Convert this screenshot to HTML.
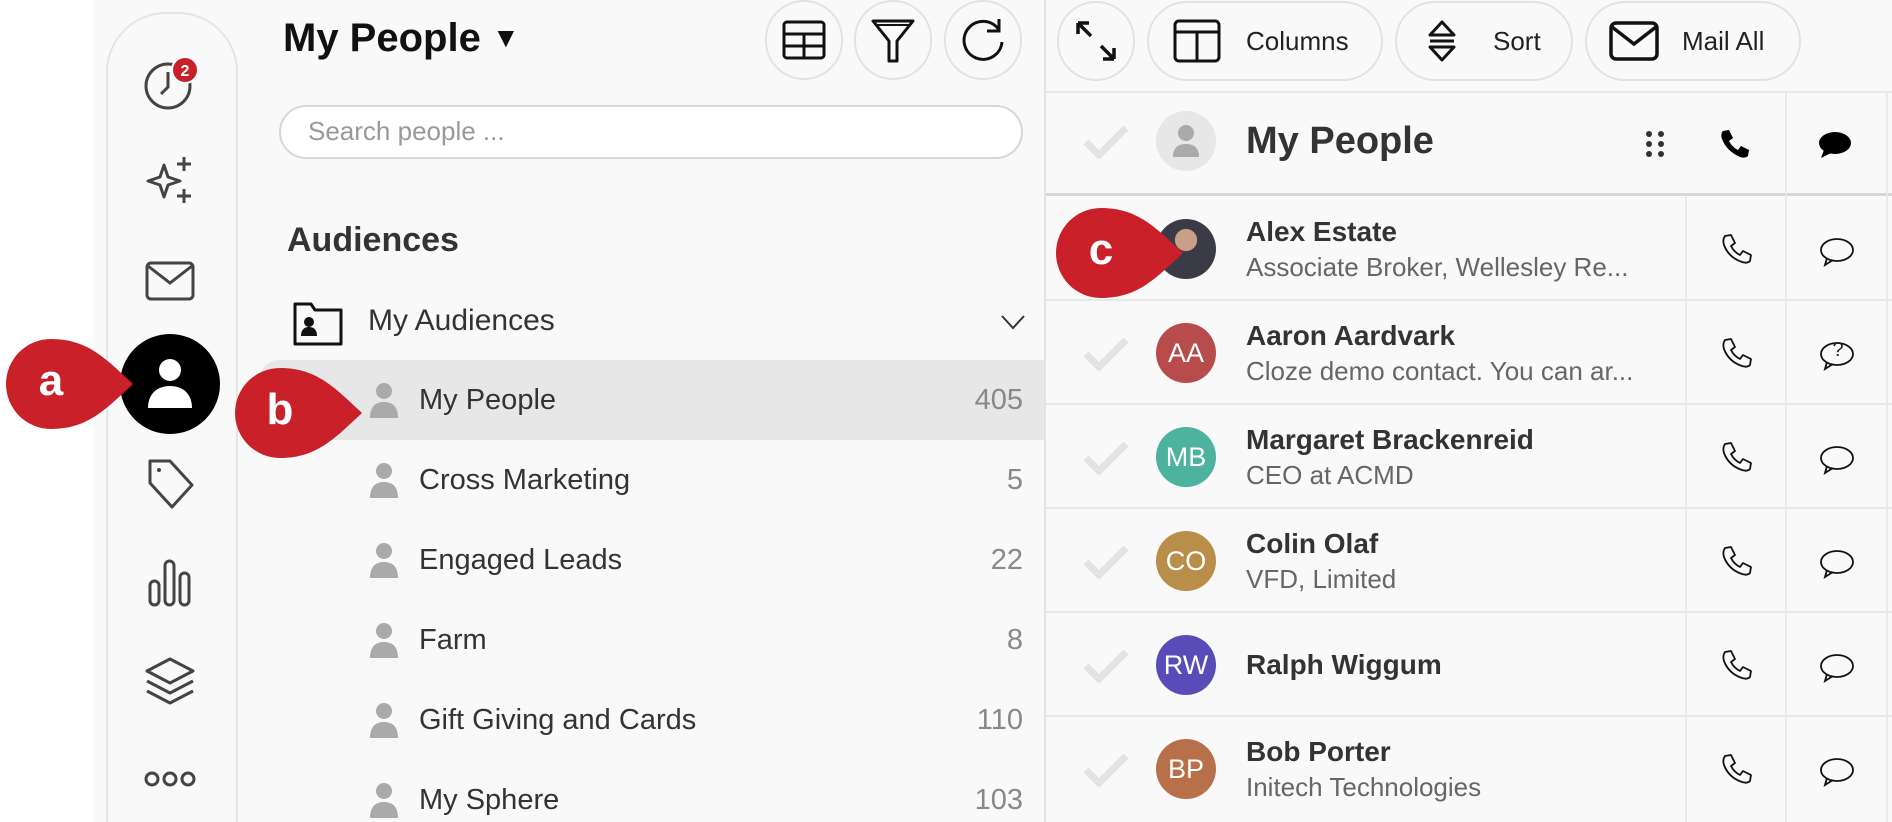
<!DOCTYPE html>
<html style="overflow:hidden;width:1892px;height:822px"><head><meta charset="utf-8"><style>
*{margin:0;padding:0;box-sizing:border-box}
body{width:1892px;height:822px;overflow:hidden;background:#faf9fa;font-family:"Liberation Sans",sans-serif;position:relative;color:#222}
.abs{position:absolute}
.side{left:106px;top:12px;width:132px;height:810px;border:2px solid #e6e5e6;border-bottom:none;border-radius:60px 60px 0 0;background:#faf9fa}
.ic{position:absolute;left:140px;width:60px;height:60px;display:flex;align-items:center;justify-content:center}
.rbtn{position:absolute;border:2px solid #e3e2e3;border-radius:50px;background:#faf9fa;display:flex;align-items:center;justify-content:center;font-size:26px;color:#222}
.li{position:absolute;left:259px;width:786px;height:80px;font-size:29px;color:#333}
.li .t{position:absolute;left:160px;top:22px}
.li .n{position:absolute;right:22px;top:22px;color:#888}
.li svg{position:absolute;left:110px;top:20px}
.row{position:absolute;left:1045px;width:847px;border-bottom:2px solid #e8e7e8}
.row .av{position:absolute;left:111px;width:60px;height:60px;border-radius:50%;color:#fff;font-size:27px;display:flex;align-items:center;justify-content:center}
.row .nm{position:absolute;left:201px;font-size:28px;font-weight:bold;color:#333;white-space:nowrap}
.row .sb{position:absolute;left:201px;font-size:26px;color:#666;white-space:nowrap}
.vd{position:absolute;width:2px;background:#ebeaeb}
.ck{position:absolute;left:38px}
.pl{position:absolute;color:#fff;font-size:44px;font-weight:bold;width:90px;text-align:center}
</style></head><body>
<div class="abs" style="left:0;top:0;width:94px;height:822px;background:#fff"></div>
<div class="abs side"></div>
<!-- sidebar icons -->
<div class="ic" style="top:54px"><svg width="60" height="60" viewBox="0 0 60 60"><circle cx="28" cy="32" r="22" fill="none" stroke="#444" stroke-width="3"/><path d="M28 18v15l-7 7" fill="none" stroke="#444" stroke-width="3"/><circle cx="45" cy="16" r="13" fill="#c9202a" stroke="#fff" stroke-width="2"/><text x="45" y="22" fill="#fff" font-size="16" font-weight="bold" text-anchor="middle" font-family="Liberation Sans">2</text></svg></div>
<div class="ic" style="top:151px"><svg width="60" height="60" viewBox="0 0 60 60"><path d="M24 14l4 12 12 4-12 4-4 12-4-12-12-4 12-4z" fill="none" stroke="#444" stroke-width="3" stroke-linejoin="round"/><path d="M44 6v14M37 13h14M44 38v14M37 45h14" stroke="#444" stroke-width="3"/></svg></div>
<div class="ic" style="top:251px"><svg width="60" height="60" viewBox="0 0 60 60"><rect x="7" y="12" width="46" height="36" rx="4" fill="none" stroke="#444" stroke-width="3"/><path d="M8 15l22 17 22-17" fill="none" stroke="#444" stroke-width="3"/></svg></div>
<div class="abs" style="left:120px;top:334px;width:100px;height:100px;border-radius:50%;background:#000"></div>
<svg class="abs" style="left:145px;top:356px" width="50" height="56" viewBox="0 0 50 56"><circle cx="25" cy="14" r="11" fill="#fff"/><path d="M3 52c0-14 9-22 22-22s22 8 22 22z" fill="#fff"/></svg>
<div class="ic" style="top:453px"><svg width="60" height="60" viewBox="0 0 60 60"><path d="M10 8h20l22 24-20 22-22-24z" fill="none" stroke="#444" stroke-width="3" stroke-linejoin="round"/><circle cx="19" cy="17" r="2" fill="#444"/></svg></div>
<div class="ic" style="top:553px"><svg width="60" height="60" viewBox="0 0 60 60"><rect x="10" y="28" width="9" height="24" rx="4.5" fill="none" stroke="#444" stroke-width="3"/><rect x="25" y="8" width="9" height="44" rx="4.5" fill="none" stroke="#444" stroke-width="3"/><rect x="40" y="20" width="9" height="32" rx="4.5" fill="none" stroke="#444" stroke-width="3"/></svg></div>
<div class="ic" style="top:653px"><svg width="60" height="60" viewBox="0 0 60 60"><path d="M30 6l23 12-23 12-23-12z" fill="none" stroke="#444" stroke-width="3" stroke-linejoin="round"/><path d="M7 28l23 12 23-12M7 38l23 12 23-12" fill="none" stroke="#444" stroke-width="3" stroke-linejoin="round"/></svg></div>
<div class="ic" style="top:749px"><svg width="60" height="60" viewBox="0 0 60 60"><circle cx="12" cy="30" r="6" fill="none" stroke="#444" stroke-width="3"/><circle cx="30" cy="30" r="6" fill="none" stroke="#444" stroke-width="3"/><circle cx="48" cy="30" r="6" fill="none" stroke="#444" stroke-width="3"/></svg></div>

<!-- middle -->
<div class="abs" style="left:283px;top:16px;font-size:40px;font-weight:bold;color:#111">My People <span style="font-size:28px;vertical-align:4px">▼</span></div>
<div class="rbtn" style="left:765px;top:0;width:78px;height:80px"><svg width="44" height="40" viewBox="0 0 44 40"><rect x="2" y="2" width="40" height="36" rx="3" fill="none" stroke="#111" stroke-width="3"/><path d="M2 14h40M2 26h40M22 14v24" stroke="#111" stroke-width="3"/></svg></div>
<div class="rbtn" style="left:854px;top:0;width:78px;height:80px"><svg width="44" height="46" viewBox="0 0 44 46"><path d="M2 4h40L26 24v20h-8V24z" fill="none" stroke="#111" stroke-width="3" stroke-linejoin="round"/><path d="M4 8h36" stroke="#111" stroke-width="2"/></svg></div>
<div class="rbtn" style="left:944px;top:0;width:78px;height:80px"><svg width="48" height="48" viewBox="0 0 48 48"><path d="M40 14A19 19 0 1 0 43 26" fill="none" stroke="#111" stroke-width="3"/><path d="M40 3v12H28" fill="none" stroke="#111" stroke-width="3"/></svg></div>
<div class="abs" style="left:279px;top:105px;width:744px;height:54px;border:2px solid #d8d7d8;border-radius:27px;background:#fff"></div>
<div class="abs" style="left:308px;top:116px;font-size:26px;color:#999">Search people ...</div>
<div class="abs" style="left:287px;top:221px;font-size:34px;font-weight:bold;color:#333">Audiences</div>
<svg class="abs" style="left:293px;top:302px" width="50" height="44" viewBox="0 0 50 44"><path d="M2 2h16l4 6h26v34H2z" fill="none" stroke="#111" stroke-width="3" stroke-linejoin="round"/><circle cx="16" cy="20" r="5" fill="#111"/><path d="M8 34c0-7 4-9 8-9s8 2 8 9z" fill="#111"/></svg>
<div class="abs" style="left:368px;top:304px;font-size:30px;color:#333">My Audiences</div>
<svg class="abs" style="left:1000px;top:314px" width="26" height="16" viewBox="0 0 26 16"><path d="M2 2l11 12L24 2" fill="none" stroke="#333" stroke-width="2"/></svg>
<div class="abs" style="left:259px;top:360px;width:786px;height:80px;background:#e8e7e8;border-radius:20px 0 0 0"></div>
<div class="li" style="top:362px"><svg width="30" height="36" viewBox="0 0 30 36"><circle cx="15" cy="9" r="8" fill="#aaa"/><path d="M1 36c0-12 6-16 14-16s14 4 14 16z" fill="#aaa"/></svg><span class="t">My People</span><span class="n">405</span></div>
<div class="li" style="top:442px"><svg width="30" height="36" viewBox="0 0 30 36"><circle cx="15" cy="9" r="8" fill="#aaa"/><path d="M1 36c0-12 6-16 14-16s14 4 14 16z" fill="#aaa"/></svg><span class="t">Cross Marketing</span><span class="n">5</span></div>
<div class="li" style="top:522px"><svg width="30" height="36" viewBox="0 0 30 36"><circle cx="15" cy="9" r="8" fill="#aaa"/><path d="M1 36c0-12 6-16 14-16s14 4 14 16z" fill="#aaa"/></svg><span class="t">Engaged Leads</span><span class="n">22</span></div>
<div class="li" style="top:602px"><svg width="30" height="36" viewBox="0 0 30 36"><circle cx="15" cy="9" r="8" fill="#aaa"/><path d="M1 36c0-12 6-16 14-16s14 4 14 16z" fill="#aaa"/></svg><span class="t">Farm</span><span class="n">8</span></div>
<div class="li" style="top:682px"><svg width="30" height="36" viewBox="0 0 30 36"><circle cx="15" cy="9" r="8" fill="#aaa"/><path d="M1 36c0-12 6-16 14-16s14 4 14 16z" fill="#aaa"/></svg><span class="t">Gift Giving and Cards</span><span class="n">110</span></div>
<div class="li" style="top:762px"><svg width="30" height="36" viewBox="0 0 30 36"><circle cx="15" cy="9" r="8" fill="#aaa"/><path d="M1 36c0-12 6-16 14-16s14 4 14 16z" fill="#aaa"/></svg><span class="t">My Sphere</span><span class="n">103</span></div>

<!-- right -->
<div class="abs" style="left:1044px;top:0;width:2px;height:822px;background:#e4e3e4"></div>
<div class="rbtn" style="left:1057px;top:1px;width:78px;height:80px"><svg width="44" height="44" viewBox="0 0 44 44"><path d="M4 4l13 13M4 4v11M4 4h11M40 40L27 27M40 40V29M40 40H29" fill="none" stroke="#111" stroke-width="3.5"/></svg></div>
<div class="rbtn" style="left:1147px;top:1px;width:236px;height:80px;justify-content:flex-start;padding-left:24px"><svg width="48" height="44" viewBox="0 0 48 44"><rect x="2" y="2" width="44" height="40" rx="4" fill="none" stroke="#111" stroke-width="3"/><path d="M2 13h44M24 13v29" stroke="#111" stroke-width="3"/></svg><span style="margin-left:25px">Columns</span></div>
<div class="rbtn" style="left:1395px;top:1px;width:178px;height:80px;justify-content:flex-start;padding-left:30px"><svg width="30" height="44" viewBox="0 0 30 44"><path d="M3 16L15 3l12 13zM3 28l12 13 12-13z" fill="none" stroke="#111" stroke-width="3" stroke-linejoin="round"/><path d="M3 22h24" stroke="#111" stroke-width="3"/></svg><span style="margin-left:36px">Sort</span></div>
<div class="rbtn" style="left:1585px;top:1px;width:216px;height:80px;justify-content:flex-start;padding-left:22px"><svg width="50" height="40" viewBox="0 0 50 40"><rect x="2" y="2" width="46" height="36" rx="5" fill="none" stroke="#111" stroke-width="3.5"/><path d="M3 6l22 17L47 6" fill="none" stroke="#111" stroke-width="3.5"/></svg><span style="margin-left:23px">Mail All</span></div>
<div class="abs" style="left:1046px;top:91px;width:846px;height:2px;background:#ebeaeb"></div>
<div class="abs" style="left:1046px;top:193px;width:846px;height:3px;background:#d8d7d8"></div>
<svg class="abs" style="left:1083px;top:125px" width="46" height="34" viewBox="0 0 46 34"><path d="M3 17l13 13L43 3" fill="none" stroke="#e4e3e4" stroke-width="7"/></svg>
<div class="abs" style="left:1156px;top:111px;width:60px;height:60px;border-radius:50%;background:#e8e7e8"></div>
<svg class="abs" style="left:1172px;top:124px" width="28" height="34" viewBox="0 0 28 34"><circle cx="14" cy="9" r="8" fill="#aaa"/><path d="M1 33c0-10 6-13 13-13s13 3 13 13z" fill="#aaa"/></svg>
<div class="abs" style="left:1246px;top:120px;font-size:38px;font-weight:bold;color:#333">My People</div>
<svg class="abs" style="left:1645px;top:130px" width="20" height="28" viewBox="0 0 20 28"><g fill="#333"><circle cx="4" cy="4" r="3"/><circle cx="16" cy="4" r="3"/><circle cx="4" cy="14" r="3"/><circle cx="16" cy="14" r="3"/><circle cx="4" cy="24" r="3"/><circle cx="16" cy="24" r="3"/></g></svg>
<svg class="abs" style="left:1719px;top:128px" width="32" height="32" viewBox="0 0 32 32"><path d="M4 3l6-1 4 8-4 3c2 4 5 7 9 9l3-4 8 4-1 6c-2 2-5 2-8 1C12 25 6 19 3 11 2 8 2 5 4 3z" fill="#000"/></svg>
<svg class="abs" style="left:1818px;top:130px" width="34" height="30" viewBox="0 0 34 30"><ellipse cx="17" cy="13" rx="16" ry="11" fill="#000"/><path d="M6 20l-3 8 10-5z" fill="#000"/></svg>
<div class="vd" style="left:1785px;top:92px;height:730px"></div>
<div class="vd" style="left:1886px;top:92px;height:730px"></div>
<div class="vd" style="left:1685px;top:197px;height:625px"></div>

<!-- rows -->
<div class="row" style="top:197px;height:104px"><div class="av" style="top:22px;background:radial-gradient(circle at 50% 35%,#c9a087 0 22%,#3b3b48 23% 100%)"></div><div class="nm" style="top:19px">Alex Estate</div><div class="sb" style="top:55px">Associate Broker, Wellesley Re...</div></div>
<div class="row" style="top:301px;height:104px"><svg class="ck" style="top:36px" width="46" height="34" viewBox="0 0 46 34"><path d="M3 17l13 13L43 3" fill="none" stroke="#e4e3e4" stroke-width="7"/></svg><div class="av" style="top:22px;background:#b84c4c">AA</div><div class="nm" style="top:19px">Aaron Aardvark</div><div class="sb" style="top:55px">Cloze demo contact. You can ar...</div></div>
<div class="row" style="top:405px;height:104px"><svg class="ck" style="top:36px" width="46" height="34" viewBox="0 0 46 34"><path d="M3 17l13 13L43 3" fill="none" stroke="#e4e3e4" stroke-width="7"/></svg><div class="av" style="top:22px;background:#4db39e">MB</div><div class="nm" style="top:19px">Margaret Brackenreid</div><div class="sb" style="top:55px">CEO at ACMD</div></div>
<div class="row" style="top:509px;height:104px"><svg class="ck" style="top:36px" width="46" height="34" viewBox="0 0 46 34"><path d="M3 17l13 13L43 3" fill="none" stroke="#e4e3e4" stroke-width="7"/></svg><div class="av" style="top:22px;background:#b98e4a">CO</div><div class="nm" style="top:19px">Colin Olaf</div><div class="sb" style="top:55px">VFD, Limited</div></div>
<div class="row" style="top:613px;height:104px"><svg class="ck" style="top:36px" width="46" height="34" viewBox="0 0 46 34"><path d="M3 17l13 13L43 3" fill="none" stroke="#e4e3e4" stroke-width="7"/></svg><div class="av" style="top:22px;background:#5a4cb8">RW</div><div class="nm" style="top:36px">Ralph Wiggum</div></div>
<div class="row" style="top:717px;height:105px;border:none"><svg class="ck" style="top:36px" width="46" height="34" viewBox="0 0 46 34"><path d="M3 17l13 13L43 3" fill="none" stroke="#e4e3e4" stroke-width="7"/></svg><div class="av" style="top:22px;background:#b8704a">BP</div><div class="nm" style="top:19px">Bob Porter</div><div class="sb" style="top:55px">Initech Technologies</div></div>

<svg width="0" height="0" style="position:absolute"><defs>
<symbol id="ph" viewBox="0 0 34 34"><path d="M5 3l6-1 4 8-4 3c2 4 5 7 9 9l3-4 8 4-1 6c-2 2-5 2-8 1C13 26 7 20 4 12 3 9 3 6 5 3z" fill="none" stroke="#111" stroke-width="1.8" stroke-linejoin="round"/></symbol>
<symbol id="ch" viewBox="0 0 36 32"><ellipse cx="18" cy="14" rx="16" ry="11" fill="none" stroke="#111" stroke-width="1.8"/><path d="M8 22l-2 7 8-5" fill="none" stroke="#111" stroke-width="1.8"/></symbol>
<symbol id="pin" viewBox="0 0 127 90"><path d="M127 45C100 20 82 0 45 0A45 45 0 0 0 45 90C82 90 100 70 127 45Z" fill="#c9202a"/></symbol>
</defs></svg>
<svg class="abs" style="left:1720px;top:233px" width="34" height="34"><use href="#ph"/></svg>
<svg class="abs" style="left:1819px;top:236px" width="36" height="32"><use href="#ch"/></svg>
<svg class="abs" style="left:1720px;top:337px" width="34" height="34"><use href="#ph"/></svg>
<svg class="abs" style="left:1819px;top:340px" width="36" height="32"><use href="#ch"/></svg>
<div class="abs" style="left:1830px;top:339px;font-size:20px;width:16px;text-align:center">?</div>
<svg class="abs" style="left:1720px;top:441px" width="34" height="34"><use href="#ph"/></svg>
<svg class="abs" style="left:1819px;top:444px" width="36" height="32"><use href="#ch"/></svg>
<svg class="abs" style="left:1720px;top:545px" width="34" height="34"><use href="#ph"/></svg>
<svg class="abs" style="left:1819px;top:548px" width="36" height="32"><use href="#ch"/></svg>
<svg class="abs" style="left:1720px;top:649px" width="34" height="34"><use href="#ph"/></svg>
<svg class="abs" style="left:1819px;top:652px" width="36" height="32"><use href="#ch"/></svg>
<svg class="abs" style="left:1720px;top:753px" width="34" height="34"><use href="#ph"/></svg>
<svg class="abs" style="left:1819px;top:756px" width="36" height="32"><use href="#ch"/></svg>

<!-- pins -->
<svg class="abs" style="left:6px;top:339px" width="127" height="90"><use href="#pin"/></svg><div class="pl" style="left:6px;top:356px">a</div>
<svg class="abs" style="left:235px;top:368px" width="127" height="90"><use href="#pin"/></svg><div class="pl" style="left:235px;top:385px">b</div>
<svg class="abs" style="left:1056px;top:208px" width="127" height="90"><use href="#pin"/></svg><div class="pl" style="left:1056px;top:225px">c</div>
</body></html>
